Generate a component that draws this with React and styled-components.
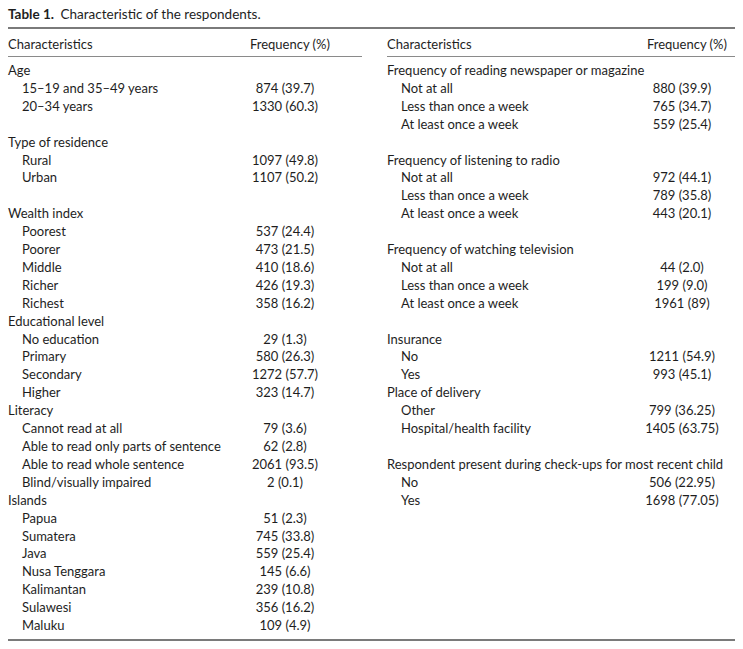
import styled, {createGlobalStyle} from 'styled-components';

const left = [
    {title: 'Age', items: [['15–19 and 35–49 years', '874 (39.7)'], ['20–34 years', '1330 (60.3)']], space: true},
    {title: 'Type of residence', items: [['Rural', '1097 (49.8)'], ['Urban', '1107 (50.2)']], space: true},
    {title: 'Wealth index', items: [['Poorest', '537 (24.4)'], ['Poorer', '473 (21.5)'], ['Middle', '410 (18.6)'], ['Richer', '426 (19.3)'], ['Richest', '358 (16.2)']]},
    {title: 'Educational level', items: [['No education', '29 (1.3)'], ['Primary', '580 (26.3)'], ['Secondary', '1272 (57.7)'], ['Higher', '323 (14.7)']]},
    {title: 'Literacy', items: [['Cannot read at all', '79 (3.6)'], ['Able to read only parts of sentence', '62 (2.8)'], ['Able to read whole sentence', '2061 (93.5)'], ['Blind/visually impaired', '2 (0.1)']]},
    {title: 'Islands', items: [['Papua', '51 (2.3)'], ['Sumatera', '745 (33.8)'], ['Java', '559 (25.4)'], ['Nusa Tenggara', '145 (6.6)'], ['Kalimantan', '239 (10.8)'], ['Sulawesi', '356 (16.2)'], ['Maluku', '109 (4.9)']]}
];

const right = [
    {title: 'Frequency of reading newspaper or magazine', items: [['Not at all', '880 (39.9)'], ['Less than once a week', '765 (34.7)'], ['At least once a week', '559 (25.4)']], space: true},
    {title: 'Frequency of listening to radio', items: [['Not at all', '972 (44.1)'], ['Less than once a week', '789 (35.8)'], ['At least once a week', '443 (20.1)']], space: true},
    {title: 'Frequency of watching television', items: [['Not at all', '44 (2.0)'], ['Less than once a week', '199 (9.0)'], ['At least once a week', '1961 (89)']], space: true},
    {title: 'Insurance', items: [['No', '1211 (54.9)'], ['Yes', '993 (45.1)']]},
    {title: 'Place of delivery', items: [['Other', '799 (36.25)'], ['Hospital/health facility', '1405 (63.75)']], space: true},
    {title: 'Respondent present during check-ups for most recent child', items: [['No', '506 (22.95)'], ['Yes', '1698 (77.05)']]}
];

function Half({groups, labelWidth}) {
    return (
        <Column>
            <Row $label={labelWidth} $head>
                <Label>Characteristics</Label>
                <HeadValue>Frequency (%)</HeadValue>
            </Row>
            <Body>
                {groups.map(g => (
                    <Group key={g.title} $space={g.space}>
                        <Heading>{g.title}</Heading>
                        {g.items.map(([name, value]) => (
                            <Row key={name} $label={labelWidth}>
                                <Label $indent>{name}</Label>
                                <Value>{value}</Value>
                            </Row>
                        ))}
                    </Group>
                ))}
            </Body>
        </Column>
    );
}

export default function App() {
    return (
        <Page>
            <Global/>
            <Title><strong>Table 1.</strong> Characteristic of the respondents.</Title>
            <Table>
                <Half groups={left} labelWidth={232}/>
                <Half groups={right} labelWidth={250}/>
            </Table>
        </Page>
    );
}

const Global = createGlobalStyle`
    body {
        margin: 0;
        background: #fff;
        color: #1e1e1e;
        font-family: Lato, 'Open Sans', sans-serif;
    }
`;

const Page = styled.div`
    width: 743px;
    padding: 4px 8px 0;
    box-sizing: border-box;
`;

const Title = styled.div`
    font-size: 13.5px;
    line-height: 20px;
    margin-bottom: 3px;

    strong {
        font-weight: 700;
        margin-right: 3px;
    }
`;

const Table = styled.div`
    display: grid;
    grid-template-columns: 354px 348px;
    column-gap: 25px;
    border-top: 2px solid #7a7a7a;
    border-bottom: 2px solid #7a7a7a;
    padding-bottom: 4px;
    font-size: 13px;
`;

const Column = styled.div`
    display: flex;
    flex-direction: column;
`;

const Body = styled.div`
    padding-top: 5px;
`;

const Group = styled.div`
    padding-bottom: ${p => p.$space ? '17.9px' : '0'};
`;

const Row = styled.div`
    display: grid;
    grid-template-columns: ${p => p.$label}px 90px;
    line-height: ${p => p.$head ? '18px' : '17.9px'};
    padding: ${p => p.$head ? '6px 0 3px' : '0'};
    border-bottom: ${p => p.$head ? '1px solid #8a8a8a' : 'none'};
`;

const Heading = styled.div`
    line-height: 17.9px;
    white-space: nowrap;
`;

const Label = styled.span`
    padding-left: ${p => p.$indent ? '14px' : '0'};
    white-space: nowrap;
`;

const Value = styled.span`
    text-align: center;
    white-space: nowrap;
`;

const HeadValue = styled.span`
    text-align: right;
    white-space: nowrap;
`;
